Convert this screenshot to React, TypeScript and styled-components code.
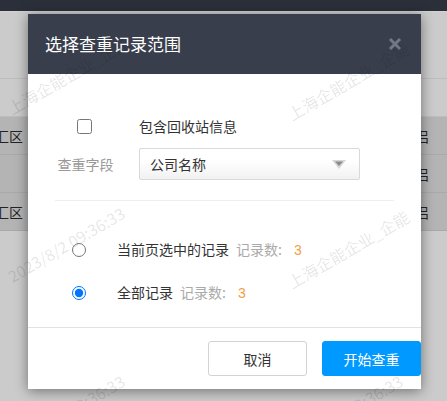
import React from 'react';
import styled, { createGlobalStyle } from 'styled-components';

const GlobalStyle = createGlobalStyle`
    html, body {
        margin: 0;
        padding: 0;
        background: #cbcbcb;
    }
    body {
        font-family: "Noto Sans CJK SC", "Noto Sans", sans-serif;
        font-size: 14px;
        color: #333;
    }
`;

interface Mark {
    text: string;
    x: number;
    y: number;
}

const COMPANY = '上海企能企业_企能';
const STAMP = '2023/8/2 09:36:33';

const marks: Array<Mark> = [
    { text: COMPANY, x: 13, y: 116 },
    { text: COMPANY, x: 293, y: 122 },
    { text: COMPANY, x: 293, y: 290 },
    { text: STAMP, x: 13, y: 284 },
    { text: STAMP, x: 13, y: 452 },
    { text: STAMP, x: 291, y: 452 }
];

const DropArrow = () => (
    <svg width="16" height="11" viewBox="0 0 16 11">
        <polygon points="1,1 15,1 8,10" fill="#d6d6d6" />
        <polygon points="4,2.5 12,2.5 8,7" fill="#8a8a8a" />
    </svg>
);

const CloseIcon = () => (
    <svg width="14" height="14" viewBox="0 0 14 14">
        <path d="M2 2 L12 12 M12 2 L2 12" stroke="#737887" strokeWidth="3" strokeLinecap="butt" />
    </svg>
);

const App: React.FC = () => (
    <>
        <GlobalStyle />
        <Page>
            <TopBar />
            <Backdrop>
                <HeadBlock />
                <Row $dark={false} />
                <Row $dark>
                    <CityCell>徐汇区</CityCell>
                    <EdgeCell>侣</EdgeCell>
                </Row>
                <Row $dark>
                    <span />
                    <EdgeCell>侣</EdgeCell>
                </Row>
                <Row $dark>
                    <CityCell>徐汇区</CityCell>
                    <EdgeCell>侣</EdgeCell>
                </Row>
            </Backdrop>

            <Modal>
                <ModalHeader>
                    <ModalTitle>选择查重记录范围</ModalTitle>
                    <CloseButton>
                        <CloseIcon />
                    </CloseButton>
                </ModalHeader>
                <ModalBody>
                    <FieldGrid>
                        <ControlCell>
                            <Checkbox type="checkbox" readOnly />
                        </ControlCell>
                        <Text>包含回收站信息</Text>
                        <FieldLabel>查重字段</FieldLabel>
                        <Select>
                            <span>公司名称</span>
                            <DropArrow />
                        </Select>
                    </FieldGrid>
                    <Divider />
                    <RadioList>
                        <RadioRow>
                            <ControlCell>
                                <Radio type="radio" name="range" readOnly />
                            </ControlCell>
                            <Text>
                                当前页选中的记录
                                <Count>记录数:</Count>
                                <Number>3</Number>
                            </Text>
                        </RadioRow>
                        <RadioRow>
                            <ControlCell>
                                <Radio type="radio" name="range" checked readOnly />
                            </ControlCell>
                            <Text>
                                全部记录
                                <Count>记录数:</Count>
                                <Number>3</Number>
                            </Text>
                        </RadioRow>
                    </RadioList>
                </ModalBody>
                <ModalFooter>
                    <Button $primary={false}>取消</Button>
                    <Button $primary>开始查重</Button>
                </ModalFooter>
            </Modal>

            <WatermarkLayer>
                {marks.map(({ text, x, y }) => (
                    <Watermark key={`${text}-${x}-${y}`} $x={x} $y={y}>
                        {text}
                    </Watermark>
                ))}
            </WatermarkLayer>
        </Page>
    </>
);

const Page = styled.div`
    position: relative;
    width: 447px;
    height: 401px;
    overflow: hidden;
    background: #cbcbcb;
`;

const TopBar = styled.div`
    height: 11px;
    background: #2b2f3a;
    border-bottom: 1px solid #d2d2d2;
`;

const Backdrop = styled.div`
    display: flex;
    flex-direction: column;
`;

const HeadBlock = styled.div`
    height: 66px;
    border-bottom: 1px solid #bdbdbd;
`;

const Row = styled.div<{ $dark: boolean }>`
    box-sizing: border-box;
    height: 38px;
    display: flex;
    align-items: center;
    justify-content: space-between;
    background: ${p => (p.$dark ? '#b4b4b4' : '#cbcbcb')};
    border-bottom: 1px solid ${p => (p.$dark ? '#a9a9a9' : '#bdbdbd')};
    color: #222;
`;

const CityCell = styled.span`
    margin-left: -19px;
`;

const EdgeCell = styled.span`
    margin-right: 18px;
`;

const Modal = styled.div`
    position: absolute;
    top: 14px;
    left: 28px;
    width: 393px;
    height: 375px;
    display: flex;
    flex-direction: column;
    background: #fff;
    box-shadow: 0 2px 12px rgba(0, 0, 0, 0.45);
`;

const ModalHeader = styled.div`
    height: 60px;
    flex-shrink: 0;
    display: flex;
    align-items: center;
    justify-content: space-between;
    padding: 0 19px 0 17px;
    background: #393e4d;
`;

const ModalTitle = styled.div`
    font-size: 17px;
    color: #fff;
    line-height: 24px;
`;

const CloseButton = styled.div`
    display: flex;
    align-items: center;
`;

const ModalBody = styled.div`
    flex: 1;
    padding: 0 27px;
`;

const FieldGrid = styled.div`
    display: grid;
    grid-template-columns: 60px 1fr;
    column-gap: 24px;
    row-gap: 11px;
    align-items: center;
    padding-top: 42px;
    grid-auto-rows: auto;
`;

const ControlCell = styled.div`
    display: flex;
    justify-content: center;
    align-items: center;
    height: 21px;
`;

const Checkbox = styled.input`
    width: 15px;
    height: 15px;
    margin: 0 0 0 -1px;
`;

const Text = styled.div`
    line-height: 21px;
    color: #333;
`;

const FieldLabel = styled.div`
    color: #999;
    text-align: center;
    line-height: 32px;
    padding-left: 1px;
`;

const Select = styled.div`
    box-sizing: border-box;
    width: 221px;
    height: 32px;
    display: flex;
    align-items: center;
    justify-content: space-between;
    padding: 0 12px 0 10px;
    border: 1px solid #d9d9d9;
    border-radius: 2px;
    background: linear-gradient(#ffffff 40%, #f1f1f1);
    color: #333;
`;

const Divider = styled.div`
    height: 1px;
    margin-top: 20px;
    background: #eeeeee;
`;

const RadioList = styled.div`
    display: flex;
    flex-direction: column;
    gap: 19px;
    padding-top: 37px;
`;

const RadioRow = styled.div`
    display: grid;
    grid-template-columns: 48px 1fr;
    column-gap: 14px;
    align-items: center;
    height: 24px;
`;

const Radio = styled.input`
    width: 14px;
    height: 14px;
    margin: 0;
`;

const Count = styled.span`
    color: #aaa;
    margin-left: 7px;
    margin-right: 12px;
`;

const Number = styled.span`
    color: #f29d3f;
    font-family: "Liberation Sans", Arial, sans-serif;
`;

const ModalFooter = styled.div`
    height: 62px;
    flex-shrink: 0;
    box-sizing: border-box;
    display: flex;
    justify-content: flex-end;
    align-items: center;
    gap: 15px;
    border-top: 1px solid #e2e2e2;
`;

const Button = styled.div<{ $primary: boolean }>`
    box-sizing: border-box;
    width: 99px;
    height: 35px;
    display: flex;
    align-items: center;
    justify-content: center;
    border-radius: 3px;
    font-size: 14px;
    border: 1px solid ${p => (p.$primary ? '#0099ff' : '#d3d3d3')};
    background: ${p => (p.$primary ? '#0099ff' : '#fff')};
    color: ${p => (p.$primary ? '#fff' : '#333')};
`;

const WatermarkLayer = styled.div`
    position: absolute;
    inset: 0;
    pointer-events: none;
`;

const Watermark = styled.span<{ $x: number; $y: number }>`
    position: absolute;
    left: ${p => p.$x}px;
    top: ${p => p.$y - 16}px;
    font-size: 16px;
    line-height: 16px;
    white-space: nowrap;
    color: rgba(0, 0, 0, 0.11);
    transform: rotate(-30deg);
    transform-origin: 0 100%;
`;

export default App;
